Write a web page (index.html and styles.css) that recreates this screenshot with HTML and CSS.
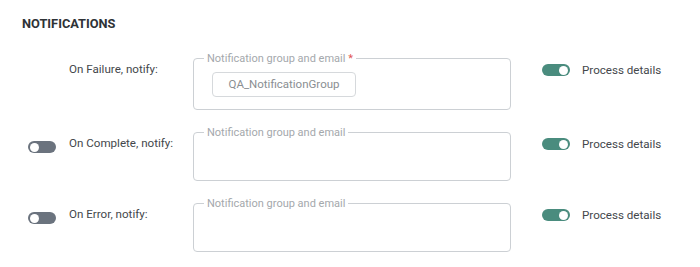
FILE: index.html
```html
<!DOCTYPE html>
<html lang="en">
<head>
    <meta charset="UTF-8">
    <meta name="viewport" content="width=device-width, initial-scale=1.0">
    <title>Notifications</title>
    <link rel="stylesheet" href="styles.css">
</head>
<body>
    <section class="notifications">
        <h2>NOTIFICATIONS</h2>

        <div class="row">
            <div class="switch-slot"></div>
            <div class="row-label">On Failure, notify:</div>
            <fieldset class="field">
                <legend>Notification group and email <span class="required">*</span></legend>
                <div class="chips">
                    <span class="chip">QA_NotificationGroup</span>
                </div>
            </fieldset>
            <div class="details">
                <span class="switch on"></span>
                <span>Process details</span>
            </div>
        </div>

        <div class="row">
            <div class="switch-slot"><span class="switch"></span></div>
            <div class="row-label">On Complete, notify:</div>
            <fieldset class="field empty">
                <legend>Notification group and email</legend>
            </fieldset>
            <div class="details">
                <span class="switch on"></span>
                <span>Process details</span>
            </div>
        </div>

        <div class="row">
            <div class="switch-slot"><span class="switch"></span></div>
            <div class="row-label">On Error, notify:</div>
            <fieldset class="field empty">
                <legend>Notification group and email</legend>
            </fieldset>
            <div class="details">
                <span class="switch on"></span>
                <span>Process details</span>
            </div>
        </div>
    </section>
</body>
</html>
```

FILE: styles.css
```css
/* General Styling */
body {
    font-family: Roboto, 'Liberation Sans', sans-serif;
    margin: 0;
    padding: 0;
    background-color: #ffffff;
    color: #43474b;
}

.notifications {
    padding: 17px 0 0 22px;
}

.notifications h2 {
    margin: 0 0 21px;
    font-size: 12.8px;
    line-height: 14px;
    font-weight: 700;
    color: #2e3236;
}

.row {
    display: flex;
    align-items: flex-start;
    margin-bottom: 16px;
}

.switch-slot {
    width: 47px;
    height: 12px;
    margin-top: 12px;
    padding-left: 6px;
    box-sizing: border-box;
}

.row-label {
    width: 124px;
    margin-top: 10px;
    font-size: 11.6px;
    line-height: 14px;
}

/* Fieldset with floating legend */
.field {
    width: 318px;
    box-sizing: border-box;
    margin: 0;
    padding: 0 18px 12px;
    border: 1px solid #ccd0d4;
    border-radius: 4px;
}

.field.empty {
    height: 55px;
}

.field legend {
    margin-left: -8px;
    padding: 0 3px;
    font-size: 11px;
    line-height: 13px;
    color: #a4a8ac;
}

.field .required {
    color: #e25555;
}

.chips {
    padding-top: 7px;
}

.chip {
    display: inline-block;
    width: 144px;
    height: 25px;
    box-sizing: border-box;
    border: 1px solid #d6d9dc;
    border-radius: 4px;
    text-align: center;
    font-size: 11.5px;
    line-height: 23px;
    color: #8a8e92;
}

.details {
    display: flex;
    align-items: center;
    gap: 12px;
    margin-left: 31px;
    margin-top: 11px;
    font-size: 11.6px;
    line-height: 14px;
}

/* Toggle switches */
.switch {
    display: inline-block;
    position: relative;
    width: 28px;
    height: 12px;
    border-radius: 6px;
    background-color: #6b737e;
}

.switch::after {
    content: '';
    position: absolute;
    top: 1.5px;
    left: 2px;
    width: 9px;
    height: 9px;
    border-radius: 50%;
    background-color: #ffffff;
}

.switch.on {
    background-color: #4a8c7e;
}

.switch.on::after {
    left: auto;
    right: 2px;
}
```
